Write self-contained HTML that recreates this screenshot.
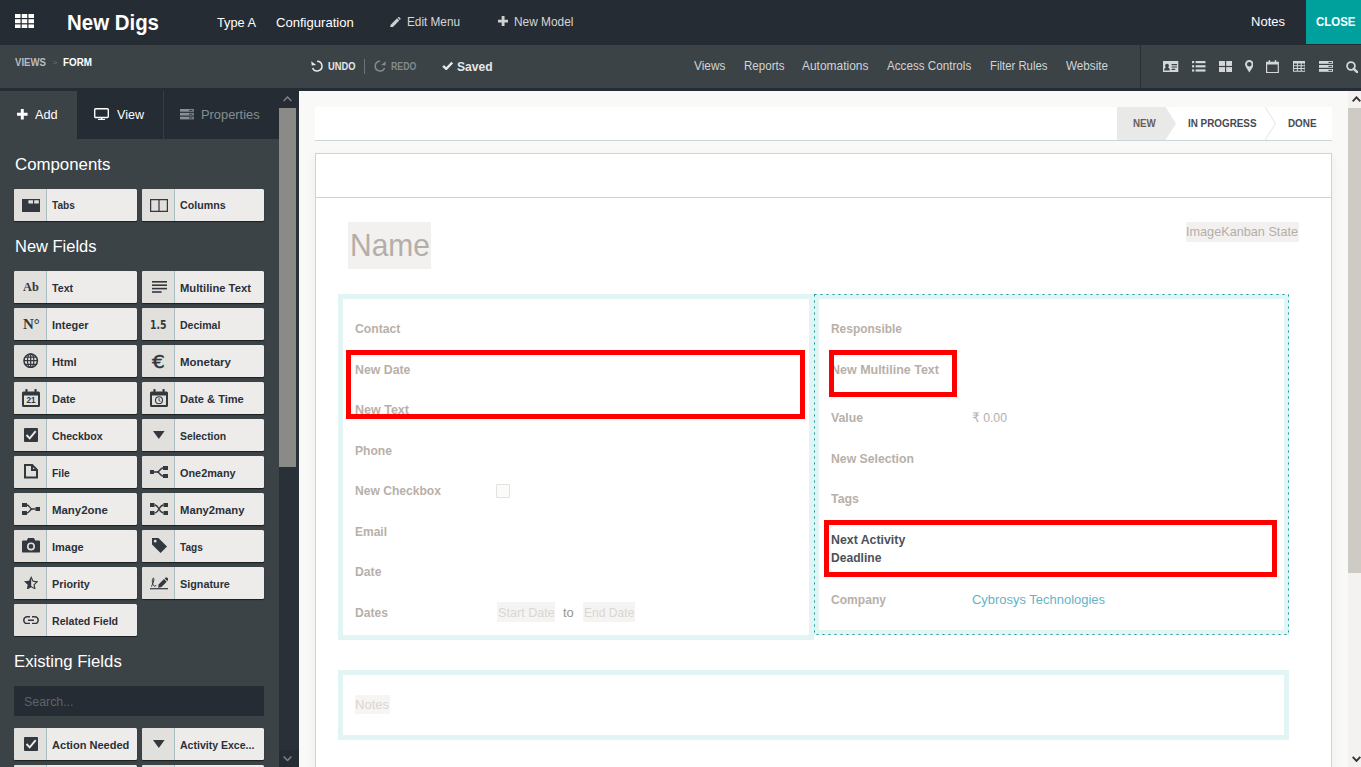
<!DOCTYPE html>
<html lang="en"><head><meta charset="utf-8"><title>New Digs - Studio</title>
<style>
html,body{margin:0;padding:0;}
body{width:1361px;height:767px;overflow:hidden;position:relative;background:#f9f9f8;font-family:"Liberation Sans",sans-serif;}
.t{position:absolute;white-space:nowrap;display:block;}
.b{position:absolute;box-sizing:border-box;display:block;}
</style></head><body>
<div class="b" style="left:0.00px;top:0.00px;width:1361.00px;height:45.00px;background:#262c34;"></div>
<svg class="b" style="left:15.00px;top:13.60px;" width="19.00" height="14.40" viewBox="0 0 18.6 14.1"><rect x="0" y="0" width="5.4" height="3.9" fill="#fff"/><rect x="6.6" y="0" width="5.4" height="3.9" fill="#fff"/><rect x="13.2" y="0" width="5.4" height="3.9" fill="#fff"/><rect x="0" y="5.1" width="5.4" height="3.9" fill="#fff"/><rect x="6.6" y="5.1" width="5.4" height="3.9" fill="#fff"/><rect x="13.2" y="5.1" width="5.4" height="3.9" fill="#fff"/><rect x="0" y="10.2" width="5.4" height="3.9" fill="#fff"/><rect x="6.6" y="10.2" width="5.4" height="3.9" fill="#fff"/><rect x="13.2" y="10.2" width="5.4" height="3.9" fill="#fff"/></svg>
<span class="t" style="left:67.00px;top:12.00px;font:700 22.30px/1 'Liberation Sans',sans-serif;color:#fff;transform:scaleX(0.9166);transform-origin:0 0;">New Digs</span>
<span class="t" style="left:216.50px;top:16.00px;font:400 13.00px/1 'Liberation Sans',sans-serif;color:#fff;transform:scaleX(0.9810);transform-origin:0 0;">Type A</span>
<span class="t" style="left:275.70px;top:16.00px;font:400 13.00px/1 'Liberation Sans',sans-serif;color:#fff;transform:scaleX(1.0049);transform-origin:0 0;">Configuration</span>
<svg class="b" style="left:390.30px;top:16.60px;" width="10.60" height="10.60" viewBox="0 0 14 14"><path d="M0 14 L0.9 10.1 L9.3 1.7 L12.3 4.7 L3.9 13.1 Z M10.1 0.9 L11 0 Q11.6 -0.4 12.2 0.2 L13.8 1.8 Q14.3 2.4 13.9 3 L13.1 3.9 Z" fill="#cdced0"/></svg>
<span class="t" style="left:407.30px;top:15.00px;font:400 13.00px/1 'Liberation Sans',sans-serif;color:#d5d6d8;transform:scaleX(0.9056);transform-origin:0 0;">Edit Menu</span>
<svg class="b" style="left:497.80px;top:16.20px;" width="10.20" height="10.20" viewBox="0 0 10 10"><path d="M3.6 0h2.8v3.6H10v2.8H6.4V10H3.6V6.4H0V3.6h3.6z" fill="#cfd0d2"/></svg>
<span class="t" style="left:514.00px;top:15.00px;font:400 13.00px/1 'Liberation Sans',sans-serif;color:#d5d6d8;transform:scaleX(0.9135);transform-origin:0 0;">New Model</span>
<span class="t" style="left:1251.00px;top:15.00px;font:400 13.00px/1 'Liberation Sans',sans-serif;color:#fff;transform:scaleX(1.0013);transform-origin:0 0;">Notes</span>
<div class="b" style="left:1306.00px;top:0.00px;width:55.00px;height:44.00px;background:#00a09d;"></div>
<span class="t" style="left:1315.50px;top:16.00px;font:700 12.50px/1 'Liberation Sans',sans-serif;color:#fff;transform:scaleX(0.9173);transform-origin:0 0;">CLOSE</span>
<div class="b" style="left:0.00px;top:45.00px;width:1361.00px;height:43.00px;background:#3b4347;"></div>
<div class="b" style="left:0.00px;top:88.00px;width:1361.00px;height:3.00px;background:#262c34;"></div>
<span class="t" style="left:15.00px;top:58.00px;font:700 10.00px/1 'Liberation Sans',sans-serif;color:#b9bcbf;transform:scaleX(0.9618);transform-origin:0 0;">VIEWS</span>
<span class="t" style="left:52.80px;top:59.00px;font:400 7.60px/1 'Liberation Sans',sans-serif;color:#70777b;">&gt;</span>
<span class="t" style="left:63.30px;top:58.00px;font:700 10.00px/1 'Liberation Sans',sans-serif;color:#fff;transform:scaleX(0.9851);transform-origin:0 0;">FORM</span>
<svg class="b" style="left:310.60px;top:60.20px;" width="12.20" height="12.20" viewBox="0 0 16 16"><path d="M8 1.6a6.4 6.4 0 1 1-5.9 8.9" fill="none" stroke="#e6e7e8" stroke-width="2"/><path d="M0.6 1.2 L0.6 7 L6.4 7 Z" fill="#e6e7e8" transform="rotate(-8 3 4)"/></svg>
<span class="t" style="left:327.60px;top:62.00px;font:700 10.00px/1 'Liberation Sans',sans-serif;color:#e6e7e8;transform:scaleX(0.9307);transform-origin:0 0;">UNDO</span>
<div class="b" style="left:364.00px;top:59.00px;width:1.00px;height:14.50px;background:#6d7478;"></div>
<svg class="b" style="left:374.00px;top:60.20px;" width="12.20" height="12.20" viewBox="0 0 16 16"><path d="M8 1.6a6.4 6.4 0 1 0 5.9 8.9" fill="none" stroke="#84898c" stroke-width="2"/><path d="M15.4 1.2 L15.4 7 L9.6 7 Z" fill="#84898c" transform="rotate(8 13 4)"/></svg>
<span class="t" style="left:391.00px;top:62.00px;font:700 10.00px/1 'Liberation Sans',sans-serif;color:#84898c;transform:scaleX(0.8792);transform-origin:0 0;">REDO</span>
<svg class="b" style="left:442.00px;top:61.20px;" width="11.40" height="9.20" viewBox="0 0 12 10"><path d="M1 5.4 L4.4 8.6 L11 1.6" fill="none" stroke="#e6e7e8" stroke-width="2.6"/></svg>
<span class="t" style="left:457.40px;top:60.00px;font:700 13.00px/1 'Liberation Sans',sans-serif;color:#e6e7e8;transform:scaleX(0.9296);transform-origin:0 0;">Saved</span>
<span class="t" style="left:694.10px;top:60.00px;font:400 12.60px/1 'Liberation Sans',sans-serif;color:#d2d4d5;transform:scaleX(0.9408);transform-origin:0 0;">Views</span>
<span class="t" style="left:743.50px;top:60.00px;font:400 12.60px/1 'Liberation Sans',sans-serif;color:#d2d4d5;transform:scaleX(0.9181);transform-origin:0 0;">Reports</span>
<span class="t" style="left:802.20px;top:60.00px;font:400 12.60px/1 'Liberation Sans',sans-serif;color:#d2d4d5;transform:scaleX(0.9494);transform-origin:0 0;">Automations</span>
<span class="t" style="left:887.20px;top:60.00px;font:400 12.60px/1 'Liberation Sans',sans-serif;color:#d2d4d5;transform:scaleX(0.9260);transform-origin:0 0;">Access Controls</span>
<span class="t" style="left:990.00px;top:60.00px;font:400 12.60px/1 'Liberation Sans',sans-serif;color:#d2d4d5;transform:scaleX(0.9024);transform-origin:0 0;">Filter Rules</span>
<span class="t" style="left:1065.50px;top:60.00px;font:400 12.60px/1 'Liberation Sans',sans-serif;color:#d2d4d5;transform:scaleX(0.9275);transform-origin:0 0;">Website</span>
<div class="b" style="left:1140.00px;top:45.00px;width:1.00px;height:43.00px;background:#282e36;"></div>
<svg class="b" style="left:1163.30px;top:60.80px;" width="15.30" height="11.40" viewBox="0 0 15.3 11.4"><path d="M0 0h15.3v11.4H0z M1.2 9.4h5.6c0-2-1-2.6-1.8-2.8c.6-.4.9-1 .9-1.8c0-1.2-.8-2-1.9-2s-1.9.8-1.9 2c0 .8.3 1.4.9 1.8c-.8.2-1.8.8-1.8 2.800z M8.600 3h5.400v1.200H8.600z M8.600 5.400h5.400v1.200H8.600z M8.600 7.800h3.600v1.200H8.600z" fill="#d4d6d7" fill-rule="evenodd"/></svg>
<svg class="b" style="left:1192.00px;top:61.20px;" width="13.50" height="10.60" viewBox="0 0 13.5 10.6"><rect x="0" y="0" width="2.2" height="2.2" fill="#d4d6d7"/><rect x="3.6" y="0" width="9.9" height="2.2" fill="#d4d6d7"/><rect x="0" y="4.2" width="2.2" height="2.2" fill="#d4d6d7"/><rect x="3.6" y="4.2" width="9.9" height="2.2" fill="#d4d6d7"/><rect x="0" y="8.4" width="2.2" height="2.2" fill="#d4d6d7"/><rect x="3.6" y="8.4" width="9.9" height="2.2" fill="#d4d6d7"/></svg>
<svg class="b" style="left:1218.90px;top:61.00px;" width="13.20" height="11.00" viewBox="0 0 13.2 11"><rect x="0" y="0" width="6" height="4.9" fill="#d4d6d7"/><rect x="7.2" y="0" width="6" height="4.9" fill="#d4d6d7"/><rect x="0" y="6.1" width="6" height="4.9" fill="#d4d6d7"/><rect x="7.2" y="6.1" width="6" height="4.9" fill="#d4d6d7"/></svg>
<svg class="b" style="left:1244.80px;top:60.40px;" width="8.60" height="12.40" viewBox="0 0 8.6 12.4"><path d="M4.3 0a4.3 4.3 0 0 1 4.3 4.3c0 2.300-2.600 5.300-4.300 8.100C2.600 9.600 0 6.600 0 4.300A4.300 4.300 0 0 1 4.300 0z M4.300 2a2.300 2.300 0 1 0 0 4.600a2.300 2.300 0 1 0 0-4.600z" fill="#d4d6d7" fill-rule="evenodd"/></svg>
<svg class="b" style="left:1266.40px;top:59.60px;" width="12.90" height="13.20" viewBox="0 0 12.9 13.2"><path d="M0 1.800h12.900v11.400H0z M1.200 4.600v7.400h10.500V4.600z" fill="#d4d6d7" fill-rule="evenodd"/><rect x="2.600" y="0" width="1.600" height="3.200" rx=".7" fill="#d4d6d7"/><rect x="8.700" y="0" width="1.600" height="3.200" rx=".7" fill="#d4d6d7"/></svg>
<svg class="b" style="left:1292.70px;top:61.00px;" width="12.60" height="10.80" viewBox="0 0 12.6 10.8"><path d="M0 0h12.600v10.800H0z M1 2.400v1.800h2.900V2.400z M4.900 2.400v1.800h2.800V2.400z M8.700 2.400v1.800h2.900V2.400z M1 5.200v1.800h2.900V5.200z M4.900 5.200v1.800h2.800V5.200z M8.700 5.200v1.800h2.900V5.200z M1 8v1.800h2.900V8z M4.900 8v1.800h2.800V8z M8.700 8v1.800h2.900V8z" fill="#d4d6d7" fill-rule="evenodd"/></svg>
<svg class="b" style="left:1318.60px;top:61.00px;" width="14.40" height="10.80" viewBox="0 0 14.4 10.8"><rect x="0" y="0" width="14.4" height="2.800" fill="#d4d6d7"/><rect x="0" y="4" width="14.4" height="2.800" fill="#d4d6d7"/><rect x="0" y="8" width="14.4" height="2.800" fill="#d4d6d7"/><rect x="9.400" y=".9" width="3.600" height="1" fill="#3b4347"/><rect x="9.400" y="4.900" width="3.600" height="1" fill="#3b4347"/><rect x="9.400" y="8.900" width="3.600" height="1" fill="#3b4347"/></svg>
<svg class="b" style="left:1346.00px;top:60.60px;" width="12.40" height="12.40" viewBox="0 0 12.4 12.4"><circle cx="5" cy="5" r="3.900" fill="none" stroke="#d4d6d7" stroke-width="1.800"/><path d="M7.800 7.800L11.600 11.600" stroke="#d4d6d7" stroke-width="2.400" stroke-linecap="round"/></svg>
<div class="b" style="left:0.00px;top:91.00px;width:279.00px;height:676.00px;background:#3b4347;"></div>
<div class="b" style="left:77.00px;top:91.00px;width:202.00px;height:48.00px;background:#262c34;"></div>
<div class="b" style="left:163.00px;top:91.00px;width:1.00px;height:48.00px;background:#363d44;"></div>
<svg class="b" style="left:17.00px;top:109.40px;" width="10.60" height="10.60" viewBox="0 0 10 10"><path d="M3.600 0h2.800v3.600H10v2.800H6.400V10H3.600V6.400H0V3.600h3.600z" fill="#fff"/></svg>
<span class="t" style="left:35.20px;top:108.00px;font:400 13.50px/1 'Liberation Sans',sans-serif;color:#fff;transform:scaleX(0.9410);transform-origin:0 0;">Add</span>
<svg class="b" style="left:94.00px;top:108.40px;" width="15.00" height="12.00" viewBox="0 0 15 12"><rect x=".7" y=".7" width="13.600" height="8.800" rx="1" fill="none" stroke="#fff" stroke-width="1.400"/><path d="M7.500 9.500v1.700" stroke="#fff" stroke-width="1.600"/><path d="M4 11.400h7" stroke="#fff" stroke-width="1.100"/></svg>
<span class="t" style="left:116.70px;top:108.00px;font:400 13.50px/1 'Liberation Sans',sans-serif;color:#fff;transform:scaleX(0.9294);transform-origin:0 0;">View</span>
<svg class="b" style="left:180.30px;top:109.40px;" width="13.80" height="10.40" viewBox="0 0 14.4 10.8"><rect x="0" y="0" width="14.4" height="2.800" fill="#8a8f93"/><rect x="0" y="4" width="14.4" height="2.800" fill="#8a8f93"/><rect x="0" y="8" width="14.4" height="2.800" fill="#8a8f93"/><rect x="9.400" y=".9" width="3.600" height="1" fill="#262c34"/><rect x="9.400" y="4.900" width="3.600" height="1" fill="#262c34"/><rect x="9.400" y="8.900" width="3.600" height="1" fill="#262c34"/></svg>
<span class="t" style="left:201.40px;top:108.00px;font:400 13.50px/1 'Liberation Sans',sans-serif;color:#878c90;transform:scaleX(0.9523);transform-origin:0 0;">Properties</span>
<span class="t" style="left:14.60px;top:156.00px;font:400 16.40px/1 'Liberation Sans',sans-serif;color:#fff;transform:scaleX(1.0259);transform-origin:0 0;">Components</span>
<span class="t" style="left:14.60px;top:238.00px;font:400 16.40px/1 'Liberation Sans',sans-serif;color:#fff;transform:scaleX(1.0048);transform-origin:0 0;">New Fields</span>
<span class="t" style="left:14.20px;top:653.00px;font:400 16.40px/1 'Liberation Sans',sans-serif;color:#fff;transform:scaleX(1.0196);transform-origin:0 0;">Existing Fields</span>
<div class="b" style="left:14.00px;top:189.40px;width:123.00px;height:31.50px;background:#edecea;box-shadow:0 1px 1px rgba(0,0,0,.55);border-radius:1.5px;"></div>
<div class="b" style="left:14.00px;top:189.40px;width:33.00px;height:31.50px;background:#e2e0dc;border-right:1px solid #a9bcc0;border-radius:1.5px 0 0 1.5px;"></div>
<span class="t" style="left:52.30px;top:199.00px;font:700 11.60px/1 'Liberation Sans',sans-serif;color:#2b3038;transform:scaleX(0.8697);transform-origin:0 0;">Tabs</span>
<svg class="b" style="left:22.00px;top:199.40px;" width="18.00" height="13.00" viewBox="0 0 18 13"><path d="M0 0h18v13H0z M6.400 1.300v3.100h4.600V1.300z M12.200 1.300v3.100h4.600V1.300z" fill="#32383e" fill-rule="evenodd"/></svg>
<div class="b" style="left:142.00px;top:189.40px;width:122.00px;height:31.50px;background:#edecea;box-shadow:0 1px 1px rgba(0,0,0,.55);border-radius:1.5px;"></div>
<div class="b" style="left:142.00px;top:189.40px;width:33.00px;height:31.50px;background:#e2e0dc;border-right:1px solid #a9bcc0;border-radius:1.5px 0 0 1.5px;"></div>
<span class="t" style="left:180.30px;top:199.00px;font:700 11.60px/1 'Liberation Sans',sans-serif;color:#2b3038;transform:scaleX(0.9189);transform-origin:0 0;">Columns</span>
<svg class="b" style="left:150.00px;top:199.40px;" width="18.00" height="13.00" viewBox="0 0 17.6 12.6"><path d="M0 0h17.600v12.600H0z M1.200 1.200v10.200h7V1.200z M9.400 1.200v10.200h7V1.200z" fill="#32383e" fill-rule="evenodd"/></svg>
<div class="b" style="left:14.00px;top:271.00px;width:123.00px;height:31.50px;background:#edecea;box-shadow:0 1px 1px rgba(0,0,0,.55);border-radius:1.5px;"></div>
<div class="b" style="left:14.00px;top:271.00px;width:33.00px;height:31.50px;background:#e2e0dc;border-right:1px solid #a9bcc0;border-radius:1.5px 0 0 1.5px;"></div>
<span class="t" style="left:52.30px;top:282.00px;font:700 11.60px/1 'Liberation Sans',sans-serif;color:#2b3038;transform:scaleX(0.9177);transform-origin:0 0;">Text</span>
<span class="t" style="left:23.40px;top:281.00px;font:700 12.40px/1 'Liberation Serif',serif;color:#32383e;transform:scaleX(0.9970);transform-origin:0 0;">Ab</span>
<div class="b" style="left:142.00px;top:271.00px;width:122.00px;height:31.50px;background:#edecea;box-shadow:0 1px 1px rgba(0,0,0,.55);border-radius:1.5px;"></div>
<div class="b" style="left:142.00px;top:271.00px;width:33.00px;height:31.50px;background:#e2e0dc;border-right:1px solid #a9bcc0;border-radius:1.5px 0 0 1.5px;"></div>
<span class="t" style="left:180.30px;top:282.00px;font:700 11.60px/1 'Liberation Sans',sans-serif;color:#2b3038;transform:scaleX(0.9679);transform-origin:0 0;">Multiline Text</span>
<svg class="b" style="left:152.00px;top:281.20px;" width="15.00" height="12.00" viewBox="0 0 15 12"><rect x="0" y="0" width="15" height="1.600" fill="#32383e"/><rect x="0" y="3.400" width="15" height="1.600" fill="#32383e"/><rect x="0" y="6.800" width="15" height="1.600" fill="#32383e"/><rect x="0" y="10.200" width="9.600" height="1.600" fill="#32383e"/></svg>
<div class="b" style="left:14.00px;top:308.00px;width:123.00px;height:31.50px;background:#edecea;box-shadow:0 1px 1px rgba(0,0,0,.55);border-radius:1.5px;"></div>
<div class="b" style="left:14.00px;top:308.00px;width:33.00px;height:31.50px;background:#e2e0dc;border-right:1px solid #a9bcc0;border-radius:1.5px 0 0 1.5px;"></div>
<span class="t" style="left:52.30px;top:319.00px;font:700 11.60px/1 'Liberation Sans',sans-serif;color:#2b3038;transform:scaleX(0.9464);transform-origin:0 0;">Integer</span>
<span class="t" style="left:23.00px;top:317.00px;font:700 15.00px/1 'Liberation Serif',serif;color:#32383e;">N°</span>
<div class="b" style="left:142.00px;top:308.00px;width:122.00px;height:31.50px;background:#edecea;box-shadow:0 1px 1px rgba(0,0,0,.55);border-radius:1.5px;"></div>
<div class="b" style="left:142.00px;top:308.00px;width:33.00px;height:31.50px;background:#e2e0dc;border-right:1px solid #a9bcc0;border-radius:1.5px 0 0 1.5px;"></div>
<span class="t" style="left:180.30px;top:319.00px;font:700 11.60px/1 'Liberation Sans',sans-serif;color:#2b3038;transform:scaleX(0.9082);transform-origin:0 0;">Decimal</span>
<span class="t" style="left:150.40px;top:319.00px;font:700 12.20px/1 'DejaVu Sans',sans-serif;color:#32383e;transform:scaleX(0.7637);transform-origin:0 0;">1.5</span>
<div class="b" style="left:14.00px;top:345.00px;width:123.00px;height:31.50px;background:#edecea;box-shadow:0 1px 1px rgba(0,0,0,.55);border-radius:1.5px;"></div>
<div class="b" style="left:14.00px;top:345.00px;width:33.00px;height:31.50px;background:#e2e0dc;border-right:1px solid #a9bcc0;border-radius:1.5px 0 0 1.5px;"></div>
<span class="t" style="left:52.30px;top:356.00px;font:700 11.60px/1 'Liberation Sans',sans-serif;color:#2b3038;transform:scaleX(0.9544);transform-origin:0 0;">Html</span>
<svg class="b" style="left:23.30px;top:352.50px;" width="15.40" height="15.40" viewBox="0 0 16 16"><circle cx="8" cy="8" r="7" fill="none" stroke="#32383e" stroke-width="1.600"/><ellipse cx="8" cy="8" rx="3.300" ry="7" fill="none" stroke="#32383e" stroke-width="1.300"/><path d="M1 8h14 M2.200 4.300h11.600 M2.200 11.700h11.600 M8 1v14" stroke="#32383e" stroke-width="1.300" fill="none"/></svg>
<div class="b" style="left:142.00px;top:345.00px;width:122.00px;height:31.50px;background:#edecea;box-shadow:0 1px 1px rgba(0,0,0,.55);border-radius:1.5px;"></div>
<div class="b" style="left:142.00px;top:345.00px;width:33.00px;height:31.50px;background:#e2e0dc;border-right:1px solid #a9bcc0;border-radius:1.5px 0 0 1.5px;"></div>
<span class="t" style="left:180.30px;top:356.00px;font:700 11.60px/1 'Liberation Sans',sans-serif;color:#2b3038;transform:scaleX(0.9872);transform-origin:0 0;">Monetary</span>
<span class="t" style="left:152.00px;top:354.00px;font:400 17.40px/1 'DejaVu Sans',sans-serif;color:#32383e;transform:scaleX(1.1567);transform-origin:0 0;-webkit-text-stroke:.45px #32383e;">€</span>
<div class="b" style="left:14.00px;top:382.00px;width:123.00px;height:31.50px;background:#edecea;box-shadow:0 1px 1px rgba(0,0,0,.55);border-radius:1.5px;"></div>
<div class="b" style="left:14.00px;top:382.00px;width:33.00px;height:31.50px;background:#e2e0dc;border-right:1px solid #a9bcc0;border-radius:1.5px 0 0 1.5px;"></div>
<span class="t" style="left:52.30px;top:393.00px;font:700 11.60px/1 'Liberation Sans',sans-serif;color:#2b3038;transform:scaleX(0.9424);transform-origin:0 0;">Date</span>
<svg class="b" style="left:22.00px;top:388.60px;" width="18.00" height="18.00" viewBox="0 0 18 18"><path d="M1.500 2.400h15q1.500 0 1.500 1.500v12.600q0 1.500-1.500 1.500h-15q-1.500 0-1.500-1.500V3.900q0-1.500 1.500-1.500z M2 6.600v9.400h14V6.600z" fill="#32383e" fill-rule="evenodd"/><rect x="3.400" y="0" width="2.100" height="3.600" rx=".6" fill="#32383e"/><rect x="12.500" y="0" width="2.100" height="3.600" rx=".6" fill="#32383e"/><text x="9" y="14.300" text-anchor="middle" font-family="Liberation Sans, sans-serif" font-size="8.2" font-weight="700" fill="#32383e">21</text></svg>
<div class="b" style="left:142.00px;top:382.00px;width:122.00px;height:31.50px;background:#edecea;box-shadow:0 1px 1px rgba(0,0,0,.55);border-radius:1.5px;"></div>
<div class="b" style="left:142.00px;top:382.00px;width:33.00px;height:31.50px;background:#e2e0dc;border-right:1px solid #a9bcc0;border-radius:1.5px 0 0 1.5px;"></div>
<span class="t" style="left:180.30px;top:393.00px;font:700 11.60px/1 'Liberation Sans',sans-serif;color:#2b3038;transform:scaleX(0.9547);transform-origin:0 0;">Date &amp; Time</span>
<svg class="b" style="left:150.00px;top:388.60px;" width="18.00" height="18.00" viewBox="0 0 18 18"><path d="M1.500 2.400h15q1.500 0 1.500 1.500v12.600q0 1.500-1.500 1.500h-15q-1.500 0-1.500-1.500V3.900q0-1.500 1.500-1.500z M2 6.600v9.400h14V6.600z" fill="#32383e" fill-rule="evenodd"/><rect x="3.400" y="0" width="2.100" height="3.600" rx=".6" fill="#32383e"/><rect x="12.500" y="0" width="2.100" height="3.600" rx=".6" fill="#32383e"/><circle cx="9" cy="11.300" r="3.500" fill="none" stroke="#32383e" stroke-width="1.100"/><path d="M9 9.200v2.300l1.500 .9" stroke="#32383e" stroke-width="1" fill="none"/></svg>
<div class="b" style="left:14.00px;top:419.00px;width:123.00px;height:31.50px;background:#edecea;box-shadow:0 1px 1px rgba(0,0,0,.55);border-radius:1.5px;"></div>
<div class="b" style="left:14.00px;top:419.00px;width:33.00px;height:31.50px;background:#e2e0dc;border-right:1px solid #a9bcc0;border-radius:1.5px 0 0 1.5px;"></div>
<span class="t" style="left:52.30px;top:430.00px;font:700 11.60px/1 'Liberation Sans',sans-serif;color:#2b3038;transform:scaleX(0.9146);transform-origin:0 0;">Checkbox</span>
<svg class="b" style="left:24.00px;top:428.00px;" width="14.00" height="14.00" viewBox="0 0 14 14"><rect width="14" height="14" rx="1" fill="#32383e"/><path d="M2.500 7l3.200 3.300l6-7.200" fill="none" stroke="#edecea" stroke-width="1.900"/></svg>
<div class="b" style="left:142.00px;top:419.00px;width:122.00px;height:31.50px;background:#edecea;box-shadow:0 1px 1px rgba(0,0,0,.55);border-radius:1.5px;"></div>
<div class="b" style="left:142.00px;top:419.00px;width:33.00px;height:31.50px;background:#e2e0dc;border-right:1px solid #a9bcc0;border-radius:1.5px 0 0 1.5px;"></div>
<span class="t" style="left:180.30px;top:430.00px;font:700 11.60px/1 'Liberation Sans',sans-serif;color:#2b3038;transform:scaleX(0.8958);transform-origin:0 0;">Selection</span>
<svg class="b" style="left:153.20px;top:430.60px;" width="11.60" height="8.00" viewBox="0 0 11.6 8"><path d="M0 0h11.600L5.800 8z" fill="#32383e"/></svg>
<div class="b" style="left:14.00px;top:456.00px;width:123.00px;height:31.50px;background:#edecea;box-shadow:0 1px 1px rgba(0,0,0,.55);border-radius:1.5px;"></div>
<div class="b" style="left:14.00px;top:456.00px;width:33.00px;height:31.50px;background:#e2e0dc;border-right:1px solid #a9bcc0;border-radius:1.5px 0 0 1.5px;"></div>
<span class="t" style="left:52.30px;top:467.00px;font:700 11.60px/1 'Liberation Sans',sans-serif;color:#2b3038;transform:scaleX(0.8906);transform-origin:0 0;">File</span>
<svg class="b" style="left:24.00px;top:464.20px;" width="14.00" height="14.60" viewBox="0 0 14 14.6"><path d="M1 1h7.200l4.800 4.800v7.800H1z" fill="none" stroke="#32383e" stroke-width="2"/><path d="M8 1v5h5" fill="none" stroke="#32383e" stroke-width="2"/></svg>
<div class="b" style="left:142.00px;top:456.00px;width:122.00px;height:31.50px;background:#edecea;box-shadow:0 1px 1px rgba(0,0,0,.55);border-radius:1.5px;"></div>
<div class="b" style="left:142.00px;top:456.00px;width:33.00px;height:31.50px;background:#e2e0dc;border-right:1px solid #a9bcc0;border-radius:1.5px 0 0 1.5px;"></div>
<span class="t" style="left:180.30px;top:467.00px;font:700 11.60px/1 'Liberation Sans',sans-serif;color:#2b3038;transform:scaleX(0.9374);transform-origin:0 0;">One2many</span>
<svg class="b" style="left:150.40px;top:465.60px;" width="18.00" height="12.00" viewBox="0 0 18 12"><rect x="0" y="4" width="4" height="4" fill="#32383e"/><rect x="13" y="0" width="5" height="4" fill="#32383e"/><rect x="13" y="8" width="5" height="4" fill="#32383e"/><path d="M4 6h3c3 0 3-4 6-4M7 6c3 0 3 4 6 4" fill="none" stroke="#32383e" stroke-width="1.300"/></svg>
<div class="b" style="left:14.00px;top:493.00px;width:123.00px;height:31.50px;background:#edecea;box-shadow:0 1px 1px rgba(0,0,0,.55);border-radius:1.5px;"></div>
<div class="b" style="left:14.00px;top:493.00px;width:33.00px;height:31.50px;background:#e2e0dc;border-right:1px solid #a9bcc0;border-radius:1.5px 0 0 1.5px;"></div>
<span class="t" style="left:52.30px;top:504.00px;font:700 11.60px/1 'Liberation Sans',sans-serif;color:#2b3038;transform:scaleX(0.9855);transform-origin:0 0;">Many2one</span>
<svg class="b" style="left:22.00px;top:502.60px;" width="18.00" height="12.00" viewBox="0 0 18 12"><rect x="13.500" y="4" width="4.500" height="4" fill="#32383e"/><rect x="0" y="0" width="5" height="4" fill="#32383e"/><rect x="0" y="8" width="5" height="4" fill="#32383e"/><path d="M13.500 6h-3c-3 0-3-4-5.500-4M10.500 6c-3 0-3 4-5.500 4" fill="none" stroke="#32383e" stroke-width="1.300"/></svg>
<div class="b" style="left:142.00px;top:493.00px;width:122.00px;height:31.50px;background:#edecea;box-shadow:0 1px 1px rgba(0,0,0,.55);border-radius:1.5px;"></div>
<div class="b" style="left:142.00px;top:493.00px;width:33.00px;height:31.50px;background:#e2e0dc;border-right:1px solid #a9bcc0;border-radius:1.5px 0 0 1.5px;"></div>
<span class="t" style="left:180.30px;top:504.00px;font:700 11.60px/1 'Liberation Sans',sans-serif;color:#2b3038;transform:scaleX(0.9712);transform-origin:0 0;">Many2many</span>
<svg class="b" style="left:150.40px;top:502.60px;" width="18.00" height="12.00" viewBox="0 0 18 12"><rect x="0" y="0" width="4.500" height="4" fill="#32383e"/><rect x="0" y="8" width="4.500" height="4" fill="#32383e"/><rect x="13.500" y="0" width="4.500" height="4" fill="#32383e"/><rect x="13.500" y="8" width="4.500" height="4" fill="#32383e"/><path d="M4.500 2c4.500 0 4.500 8 9 8M4.500 10c4.500 0 4.500-8 9-8" fill="none" stroke="#32383e" stroke-width="1.400"/></svg>
<div class="b" style="left:14.00px;top:530.00px;width:123.00px;height:31.50px;background:#edecea;box-shadow:0 1px 1px rgba(0,0,0,.55);border-radius:1.5px;"></div>
<div class="b" style="left:14.00px;top:530.00px;width:33.00px;height:31.50px;background:#e2e0dc;border-right:1px solid #a9bcc0;border-radius:1.5px 0 0 1.5px;"></div>
<span class="t" style="left:52.30px;top:541.00px;font:700 11.60px/1 'Liberation Sans',sans-serif;color:#2b3038;transform:scaleX(0.9456);transform-origin:0 0;">Image</span>
<svg class="b" style="left:22.00px;top:538.40px;" width="18.00" height="14.60" viewBox="0 0 18 14.6"><path d="M1.200 2.400h3.600l1.200-2.400h6l1.200 2.400h3.600q1.200 0 1.200 1.200v9.800q0 1.200-1.200 1.200H1.200q-1.200 0-1.200-1.200V3.600q0-1.200 1.200-1.200z M9 4.400a4 4 0 1 0 0 8a4 4 0 1 0 0-8z M9 6a2.400 2.400 0 1 1 0 4.800a2.400 2.400 0 1 1 0-4.800z" fill="#32383e" fill-rule="evenodd"/></svg>
<div class="b" style="left:142.00px;top:530.00px;width:122.00px;height:31.50px;background:#edecea;box-shadow:0 1px 1px rgba(0,0,0,.55);border-radius:1.5px;"></div>
<div class="b" style="left:142.00px;top:530.00px;width:33.00px;height:31.50px;background:#e2e0dc;border-right:1px solid #a9bcc0;border-radius:1.5px 0 0 1.5px;"></div>
<span class="t" style="left:180.30px;top:541.00px;font:700 11.60px/1 'Liberation Sans',sans-serif;color:#2b3038;transform:scaleX(0.8697);transform-origin:0 0;">Tags</span>
<svg class="b" style="left:152.00px;top:538.40px;" width="15.00" height="15.00" viewBox="0 0 15 15"><path d="M0 0h6.400l8.600 8.600l-6.400 6.400L0 6.400z M3.200 1.800a1.400 1.400 0 1 0 0 2.800a1.400 1.400 0 1 0 0-2.800z" fill="#32383e" fill-rule="evenodd"/></svg>
<div class="b" style="left:14.00px;top:567.00px;width:123.00px;height:31.50px;background:#edecea;box-shadow:0 1px 1px rgba(0,0,0,.55);border-radius:1.5px;"></div>
<div class="b" style="left:14.00px;top:567.00px;width:33.00px;height:31.50px;background:#e2e0dc;border-right:1px solid #a9bcc0;border-radius:1.5px 0 0 1.5px;"></div>
<span class="t" style="left:52.30px;top:578.00px;font:700 11.60px/1 'Liberation Sans',sans-serif;color:#2b3038;transform:scaleX(0.9308);transform-origin:0 0;">Priority</span>
<svg class="b" style="left:23.60px;top:575.60px;" width="14.40" height="13.80" viewBox="0 0 14.4 13.8"><path d="M7.200 0l2.200 4.700l5 .6l-3.700 3.500l1 5l-4.500-2.500l-4.500 2.500l1-5L0 5.300l5-.6z M7.200 2.600v7.500l2.900 1.600l-.6-3.200l2.400-2.300l-3.200-.4z" fill="#32383e" fill-rule="evenodd"/></svg>
<div class="b" style="left:142.00px;top:567.00px;width:122.00px;height:31.50px;background:#edecea;box-shadow:0 1px 1px rgba(0,0,0,.55);border-radius:1.5px;"></div>
<div class="b" style="left:142.00px;top:567.00px;width:33.00px;height:31.50px;background:#e2e0dc;border-right:1px solid #a9bcc0;border-radius:1.5px 0 0 1.5px;"></div>
<span class="t" style="left:180.30px;top:578.00px;font:700 11.60px/1 'Liberation Sans',sans-serif;color:#2b3038;transform:scaleX(0.9327);transform-origin:0 0;">Signature</span>
<svg class="b" style="left:150.00px;top:574.40px;" width="18.00" height="16.00" viewBox="0 0 18 16"><path d="M0 14.700h18" stroke="#32383e" stroke-width="1.200"/><path d="M8.800 10.300l5.200-5.200l2.700 2.700l-5.200 5.200l-3.400.7z" fill="#32383e"/><path d="M14.700 4.400l1-1q.6-.5 1.200 0l1.400 1.400q.5.600 0 1.200l-1 1z" fill="#32383e"/><path d="M1.400 12.600c1.200-2.600 3.200-6.800 2.400-8.200c-.9-1.200-1.800 1.400-1.400 4c.3 2.200 1.300 4 2.400 4c.7 0 .9-.7 1.300-1.400" fill="none" stroke="#32383e" stroke-width="1"/></svg>
<div class="b" style="left:14.00px;top:604.00px;width:123.00px;height:31.50px;background:#edecea;box-shadow:0 1px 1px rgba(0,0,0,.55);border-radius:1.5px;"></div>
<div class="b" style="left:14.00px;top:604.00px;width:33.00px;height:31.50px;background:#e2e0dc;border-right:1px solid #a9bcc0;border-radius:1.5px 0 0 1.5px;"></div>
<span class="t" style="left:52.30px;top:615.00px;font:700 11.60px/1 'Liberation Sans',sans-serif;color:#2b3038;transform:scaleX(0.9155);transform-origin:0 0;">Related Field</span>
<svg class="b" style="left:23.00px;top:616.00px;" width="16.00" height="8.40" viewBox="0 0 16 8.4"><path d="M7 0.800H4.200a3.400 3.400 0 0 0 0 6.800H7 M9 0.800h2.800a3.400 3.400 0 0 1 0 6.800H9 M5 4.200h6" fill="none" stroke="#32383e" stroke-width="1.600"/></svg>
<div class="b" style="left:14.00px;top:686.00px;width:250.00px;height:29.60px;background:#262c34;"></div>
<span class="t" style="left:24.30px;top:695.00px;font:400 13.00px/1 'Liberation Sans',sans-serif;color:#5d6469;transform:scaleX(0.9514);transform-origin:0 0;">Search...</span>
<div class="b" style="left:14.00px;top:728.00px;width:123.00px;height:31.50px;background:#edecea;box-shadow:0 1px 1px rgba(0,0,0,.55);border-radius:1.5px;"></div>
<div class="b" style="left:14.00px;top:728.00px;width:33.00px;height:31.50px;background:#e2e0dc;border-right:1px solid #a9bcc0;border-radius:1.5px 0 0 1.5px;"></div>
<span class="t" style="left:52.30px;top:739.00px;font:700 11.60px/1 'Liberation Sans',sans-serif;color:#2b3038;transform:scaleX(0.9531);transform-origin:0 0;">Action Needed</span>
<svg class="b" style="left:24.00px;top:737.00px;" width="14.00" height="14.00" viewBox="0 0 14 14"><rect width="14" height="14" rx="1" fill="#32383e"/><path d="M2.500 7l3.200 3.300l6-7.200" fill="none" stroke="#edecea" stroke-width="1.900"/></svg>
<div class="b" style="left:142.00px;top:728.00px;width:122.00px;height:31.50px;background:#edecea;box-shadow:0 1px 1px rgba(0,0,0,.55);border-radius:1.5px;"></div>
<div class="b" style="left:142.00px;top:728.00px;width:33.00px;height:31.50px;background:#e2e0dc;border-right:1px solid #a9bcc0;border-radius:1.5px 0 0 1.5px;"></div>
<span class="t" style="left:180.30px;top:739.00px;font:700 11.60px/1 'Liberation Sans',sans-serif;color:#2b3038;transform:scaleX(0.9086);transform-origin:0 0;">Activity Exce...</span>
<svg class="b" style="left:153.20px;top:739.60px;" width="11.60" height="8.00" viewBox="0 0 11.6 8"><path d="M0 0h11.600L5.800 8z" fill="#32383e"/></svg>
<div class="b" style="left:14.00px;top:765.00px;width:123.00px;height:31.50px;background:#edecea;box-shadow:0 1px 1px rgba(0,0,0,.55);border-radius:1.5px;"></div>
<div class="b" style="left:14.00px;top:765.00px;width:33.00px;height:31.50px;background:#e2e0dc;border-right:1px solid #a9bcc0;border-radius:1.5px 0 0 1.5px;"></div>
<div class="b" style="left:142.00px;top:765.00px;width:122.00px;height:31.50px;background:#edecea;box-shadow:0 1px 1px rgba(0,0,0,.55);border-radius:1.5px;"></div>
<div class="b" style="left:142.00px;top:765.00px;width:33.00px;height:31.50px;background:#e2e0dc;border-right:1px solid #a9bcc0;border-radius:1.5px 0 0 1.5px;"></div>
<div class="b" style="left:279.00px;top:91.00px;width:20.00px;height:676.00px;background:#2a3038;"></div>
<div class="b" style="left:279.00px;top:91.00px;width:20.00px;height:17.00px;background:#262c34;"></div>
<svg class="b" style="left:283.00px;top:96.00px;" width="9.00" height="5.60" viewBox="0 0 9 5.6"><path d="M.6 5L4.500 1L8.400 5" fill="none" stroke="#7f8488" stroke-width="1.400"/></svg>
<div class="b" style="left:279.00px;top:108.00px;width:17.00px;height:359.00px;background:#8a8a87;"></div>
<div class="b" style="left:279.00px;top:750.00px;width:20.00px;height:17.00px;background:#262c34;"></div>
<svg class="b" style="left:283.00px;top:755.60px;" width="9.00" height="5.60" viewBox="0 0 9 5.6"><path d="M.6 .6L4.500 4.600L8.400 .6" fill="none" stroke="#7f8488" stroke-width="1.400"/></svg>
<div class="b" style="left:299.00px;top:91.00px;width:1049.00px;height:676.00px;background:#f9f9f8;"></div>
<div class="b" style="left:315.00px;top:107.00px;width:1017.00px;height:34.00px;background:#fff;border-bottom:1px solid #ccd6da;"></div>
<svg class="b" style="left:1117.00px;top:107.00px;" width="60.00" height="33.00" viewBox="0 0 60 33"><path d="M0 0H48.500L59 16.500L48.500 33H0z" fill="#e9e9e8"/></svg>
<svg class="b" style="left:1259.00px;top:107.00px;" width="20.00" height="33.00" viewBox="0 0 20 33"><path d="M6 0L16.500 16.500L6 33" fill="none" stroke="#e2e4e4" stroke-width="1"/></svg>
<span class="t" style="left:1133.00px;top:118.00px;font:700 11.00px/1 'Liberation Sans',sans-serif;color:#6a5c57;transform:scaleX(0.8884);transform-origin:0 0;">NEW</span>
<span class="t" style="left:1187.50px;top:118.00px;font:700 11.00px/1 'Liberation Sans',sans-serif;color:#454b54;transform:scaleX(0.8965);transform-origin:0 0;">IN PROGRESS</span>
<span class="t" style="left:1287.50px;top:118.00px;font:700 11.00px/1 'Liberation Sans',sans-serif;color:#454b54;transform:scaleX(0.8968);transform-origin:0 0;">DONE</span>
<div class="b" style="left:315.00px;top:153.00px;width:1017.00px;height:620.00px;background:#fff;border:1px solid #ccd5d9;box-shadow:0 4px 10px rgba(0,0,0,.06);"></div>
<div class="b" style="left:316.00px;top:197.00px;width:1015.00px;height:1.00px;background:#ccd6da;"></div>
<div class="b" style="left:348.00px;top:222.00px;width:83.00px;height:47.00px;background:#f3f1ef;"></div>
<span class="t" style="left:350.00px;top:231.00px;font:400 30.70px/1 'Liberation Sans',sans-serif;color:#b5aea8;transform:scaleX(0.9767);transform-origin:0 0;">Name</span>
<div class="b" style="left:1186.00px;top:222.00px;width:113.00px;height:20.00px;background:#f3f1ef;"></div>
<span class="t" style="left:1186.40px;top:225.00px;font:400 13.00px/1 'Liberation Sans',sans-serif;color:#b3aeaa;transform:scaleX(0.9746);transform-origin:0 0;">ImageKanban State</span>
<div class="b" style="left:338.00px;top:294.00px;width:476.00px;height:346.00px;background:#fff;border:5px solid #e2f4f4;"></div>
<div class="b" style="left:814.00px;top:294.00px;width:475.00px;height:341.00px;background:#fff;border:5px solid #e2f4f4;"></div>
<svg class="b" style="left:814.00px;top:294.00px;" width="475.00" height="341.00" viewBox="0 0 475 341"><rect x=".5" y=".5" width="474" height="340" fill="none" stroke="#00a09d" stroke-width="1" stroke-dasharray="2 4"/></svg>
<span class="t" style="left:355.40px;top:323.00px;font:700 12.60px/1 'Liberation Sans',sans-serif;color:#b8b0a8;transform:scaleX(0.9681);transform-origin:0 0;">Contact</span>
<span class="t" style="left:355.40px;top:364.00px;font:700 12.60px/1 'Liberation Sans',sans-serif;color:#b8b0a8;transform:scaleX(0.9786);transform-origin:0 0;">New Date</span>
<span class="t" style="left:355.40px;top:404.00px;font:700 12.60px/1 'Liberation Sans',sans-serif;color:#b8b0a8;transform:scaleX(0.9930);transform-origin:0 0;">New Text</span>
<span class="t" style="left:355.40px;top:445.00px;font:700 12.60px/1 'Liberation Sans',sans-serif;color:#b8b0a8;transform:scaleX(0.9609);transform-origin:0 0;">Phone</span>
<span class="t" style="left:355.40px;top:485.00px;font:700 12.60px/1 'Liberation Sans',sans-serif;color:#b8b0a8;transform:scaleX(0.9596);transform-origin:0 0;">New Checkbox</span>
<span class="t" style="left:355.40px;top:526.00px;font:700 12.60px/1 'Liberation Sans',sans-serif;color:#b8b0a8;transform:scaleX(0.9519);transform-origin:0 0;">Email</span>
<span class="t" style="left:355.40px;top:566.00px;font:700 12.60px/1 'Liberation Sans',sans-serif;color:#b8b0a8;transform:scaleX(0.9701);transform-origin:0 0;">Date</span>
<span class="t" style="left:355.40px;top:607.00px;font:700 12.60px/1 'Liberation Sans',sans-serif;color:#b8b0a8;transform:scaleX(0.9615);transform-origin:0 0;">Dates</span>
<div class="b" style="left:496.00px;top:484.00px;width:14.00px;height:14.00px;background:#fbfbfa;border:1px solid #e4e2df;border-radius:1px;"></div>
<div class="b" style="left:497.00px;top:602.00px;width:58.00px;height:20.00px;background:#f5f4f2;"></div>
<span class="t" style="left:497.50px;top:606.00px;font:400 13.00px/1 'Liberation Sans',sans-serif;color:#dad7d3;transform:scaleX(0.9705);transform-origin:0 0;">Start Date</span>
<span class="t" style="left:563.40px;top:606.00px;font:400 13.00px/1 'Liberation Sans',sans-serif;color:#9a948f;transform:scaleX(0.9961);transform-origin:0 0;">to</span>
<div class="b" style="left:583.00px;top:602.00px;width:52.00px;height:20.00px;background:#f5f4f2;"></div>
<span class="t" style="left:583.90px;top:606.00px;font:400 13.00px/1 'Liberation Sans',sans-serif;color:#dad7d3;transform:scaleX(0.9299);transform-origin:0 0;">End Date</span>
<span class="t" style="left:831.20px;top:323.00px;font:700 12.60px/1 'Liberation Sans',sans-serif;color:#b8b0a8;transform:scaleX(0.9477);transform-origin:0 0;">Responsible</span>
<span class="t" style="left:831.20px;top:364.00px;font:700 12.60px/1 'Liberation Sans',sans-serif;color:#b8b0a8;transform:scaleX(0.9910);transform-origin:0 0;">New Multiline Text</span>
<span class="t" style="left:831.20px;top:412.00px;font:700 12.60px/1 'Liberation Sans',sans-serif;color:#b8b0a8;transform:scaleX(0.9719);transform-origin:0 0;">Value</span>
<span class="t" style="left:831.20px;top:453.00px;font:700 12.60px/1 'Liberation Sans',sans-serif;color:#b8b0a8;transform:scaleX(0.9716);transform-origin:0 0;">New Selection</span>
<span class="t" style="left:831.20px;top:493.00px;font:700 12.60px/1 'Liberation Sans',sans-serif;color:#b8b0a8;transform:scaleX(0.9833);transform-origin:0 0;">Tags</span>
<span class="t" style="left:831.20px;top:594.00px;font:700 12.60px/1 'Liberation Sans',sans-serif;color:#b8b0a8;transform:scaleX(0.9581);transform-origin:0 0;">Company</span>
<span class="t" style="left:831.20px;top:534.00px;font:700 12.60px/1 'Liberation Sans',sans-serif;color:#4c5158;transform:scaleX(0.9794);transform-origin:0 0;">Next Activity</span>
<span class="t" style="left:831.20px;top:552.00px;font:700 12.60px/1 'Liberation Sans',sans-serif;color:#4c5158;transform:scaleX(0.9597);transform-origin:0 0;">Deadline</span>
<span class="t" style="left:971.6px;top:411px;font:400 13px/1 'Liberation Sans','DejaVu Sans',sans-serif;color:#b3afab;transform:scaleX(.94);transform-origin:0 0;">₹ 0.00</span>
<span class="t" style="left:972.40px;top:593.00px;font:400 13.00px/1 'Liberation Sans',sans-serif;color:#66b3c4;transform:scaleX(0.9967);transform-origin:0 0;">Cybrosys Technologies</span>
<div class="b" style="left:346.00px;top:350.00px;width:459.00px;height:69.00px;border:5px solid #fe0000;"></div>
<div class="b" style="left:829.00px;top:350.00px;width:128.00px;height:47.00px;border:5px solid #fe0000;"></div>
<div class="b" style="left:824.00px;top:520.00px;width:453.00px;height:57.00px;border:5px solid #fe0000;"></div>
<div class="b" style="left:338.00px;top:670.00px;width:951.00px;height:70.00px;background:#fff;border:5px solid #e2f4f4;"></div>
<div class="b" style="left:355.00px;top:695.00px;width:35.00px;height:18.60px;background:#f6f5f3;"></div>
<span class="t" style="left:355.40px;top:699.00px;font:400 12.60px/1 'Liberation Sans',sans-serif;color:#d9d6d2;transform:scaleX(1.0331);transform-origin:0 0;">Notes</span>
<div class="b" style="left:1348.00px;top:91.00px;width:13.00px;height:676.00px;background:#f3f2f0;"></div>
<div class="b" style="left:1348.00px;top:108.00px;width:13.00px;height:465.00px;background:#cecbc4;"></div>
<svg class="b" style="left:1352.40px;top:95.60px;" width="9.00" height="6.00" viewBox="0 0 9 6"><path d="M.7 5.300L4.500 1.300L8.300 5.300" fill="none" stroke="#3b3634" stroke-width="1.900"/></svg>
<svg class="b" style="left:1352.20px;top:756.00px;" width="9.00" height="6.40" viewBox="0 0 9 6.4"><path d="M.7 .8L4.500 5L8.300 .8" fill="none" stroke="#3b3634" stroke-width="1.900"/></svg>
</body></html>
